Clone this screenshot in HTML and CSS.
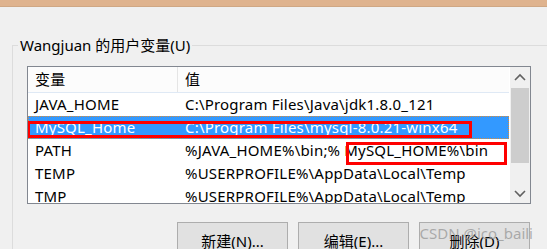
FILE: index.html
```html
<!DOCTYPE html>
<html lang="zh-CN">
<head>
    <meta charset="UTF-8">
    <title>环境变量</title>
    <link rel="stylesheet" href="styles.css">
</head>
<body>
    <div class="titlebar"></div>

    <fieldset class="group">
        <legend>Wangjuan 的用户变量(U)</legend>

        <div class="listbox">
            <div class="list">
                <div class="row head">
                    <span class="name">变量</span>
                    <span class="value">值</span>
                </div>
                <div class="row">
                    <span class="name">JAVA_HOME</span>
                    <span class="value">C:\Program Files\Java\jdk1.8.0_121</span>
                </div>
                <div class="row selected">
                    <span class="name">MySQL_Home</span>
                    <span class="value">C:\Program Files\mysql-8.0.21-winx64</span>
                </div>
                <div class="row">
                    <span class="name">PATH</span>
                    <span class="value">%JAVA_HOME%\bin;%<span class="pasted">MySQL_HOME%\bin</span></span>
                </div>
                <div class="row">
                    <span class="name">TEMP</span>
                    <span class="value">%USERPROFILE%\AppData\Local\Temp</span>
                </div>
                <div class="row">
                    <span class="name">TMP</span>
                    <span class="value">%USERPROFILE%\AppData\Local\Temp</span>
                </div>
            </div>
            <div class="scrollbar">
                <svg class="arrow" width="20" height="21" viewBox="0 0 20 21">
                    <path d="M5 13 L10 8 L15 13" fill="none" stroke="#606060" stroke-width="1.6"/>
                </svg>
                <div class="thumb"></div>
                <div class="track"></div>
                <svg class="arrow" width="20" height="20" viewBox="0 0 20 20">
                    <path d="M5 8 L10 13 L15 8" fill="none" stroke="#606060" stroke-width="1.6"/>
                </svg>
            </div>
            <!-- 红框标注 -->
            <div class="mark mark-row"></div>
            <div class="mark mark-bin"></div>
        </div>

        <div class="buttons">
            <button>新建(N)...</button>
            <button>编辑(E)...</button>
            <button>删除(D)</button>
            <span class="watermark">CSDN @ico_baili</span>
        </div>
    </fieldset>
</body>
</html>
```

FILE: styles.css
```css
body {
    margin: 0;
    background: #f0f0f0;
    font-family: "Noto Sans", "Noto Sans CJK SC", sans-serif;
    font-size: 15px;
    color: #000;
    overflow: hidden;
}
.titlebar {
    height: 6px;
    background: #dfb38e;
    border-bottom: 1px solid #cfa784;
}

.group {
    margin: 28px 0 0 12px;
    padding: 11px 0 0 14px;
    border: 1px solid #dcdcdc;
    border-right: none;
    border-bottom: none;
}
.group legend {
    margin-left: -9px;
    padding: 0 2px;
    line-height: 20px;
}

.listbox {
    position: relative;
    display: flex;
    width: 504px;
    height: 138px;
    box-sizing: border-box;
    border: 1px solid #828790;
    background: #fff;
    overflow: hidden;
}
.list {
    width: 481px;
    letter-spacing: 0.2px;
}
.row {
    display: flex;
    height: 23px;
    line-height: 23px;
    white-space: nowrap;
}
.row .name {
    width: 150px;
    padding-left: 7px;
    box-sizing: border-box;
}
.row .value {
    padding-left: 7px;
}
.row .pasted {
    padding-left: 4px;
}
.row.head {
    height: 25px;
    line-height: 25px;
    background: #fcfcfc;
    border-bottom: 1px solid #dfe9f5;
}
.row.head .name {
    border-right: 1px solid #e5e5e5;
}
.row.selected {
    background: #3399ff;
    color: #fff;
    outline: 1px dotted #d98c3a;
    outline-offset: -1px;
}

.scrollbar {
    display: flex;
    flex-direction: column;
    width: 20px;
    margin-left: 1px;
    background: #f0f0f0;
}
.arrow {
    display: block;
}
.thumb {
    height: 75px;
    margin: 0 1px 0 1px;
    background: #cdcdcd;
}
.track {
    flex: 1;
}

.mark {
    position: absolute;
    border: 3px solid #f00;
    box-sizing: border-box;
}
.mark-row {
    left: -1px;
    top: 54px;
    width: 445px;
    height: 17px;
}
.mark-bin {
    left: 318px;
    top: 75px;
    width: 161px;
    height: 23px;
}

.buttons {
    position: relative;
    display: flex;
    justify-content: flex-end;
    gap: 10px;
    margin-top: 18px;
    padding-right: 17px;
}
.buttons button {
    width: 111px;
    height: 32px;
    padding: 5px 0 0;
    border: 1px solid #adadad;
    background: #e1e1e1;
    font: inherit;
    line-height: 20px;
    color: #000;
    vertical-align: top;
}
.watermark {
    position: absolute;
    right: 14px;
    top: 1px;
    color: rgba(150, 150, 150, 0.75);
    font-size: 15px;
}
```
